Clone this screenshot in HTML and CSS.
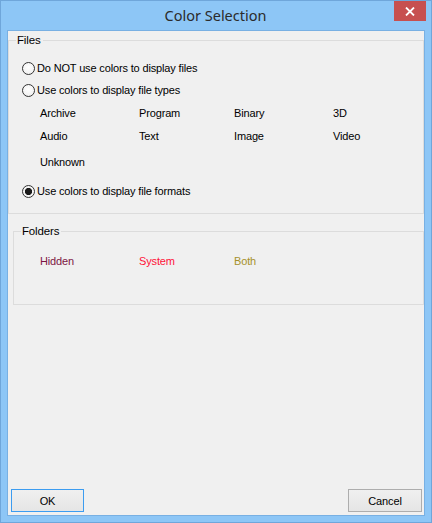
FILE: index.html
```html
<!DOCTYPE html>
<html>
<head>
<meta charset="utf-8">
<link rel="stylesheet" href="styles.css">
</head>
<body>
<div class="window">
  <div class="titlebar">
    <span></span>
    <span class="title">Color Selection</span>
    <span class="close"><svg width="10" height="9" viewBox="0 0 10 9"><path d="M1 0.5 L9 8.5 M9 0.5 L1 8.5" stroke="#fff" stroke-width="1.8" fill="none"/></svg></span>
  </div>
  <div class="client">
    <fieldset class="group files">
      <legend>Files</legend>
      <div class="radio r1">Do NOT use colors to display files</div>
      <div class="radio r2">Use colors to display file types</div>
      <div class="types">
        <span>Archive</span><span>Program</span><span>Binary</span><span>3D</span>
        <span class="row2">Audio</span><span class="row2">Text</span><span class="row2">Image</span><span class="row2">Video</span>
        <span class="row3">Unknown</span>
      </div>
      <div class="radio checked r3">Use colors to display file formats</div>
    </fieldset>
    <fieldset class="group folders">
      <legend>Folders</legend>
      <div class="types fold">
        <span class="hidden">Hidden</span><span class="system">System</span><span class="both">Both</span>
      </div>
    </fieldset>
    <div class="buttons">
      <div class="btn default">OK</div>
      <div class="btn">Cancel</div>
    </div>
  </div>
</div>
</body>
</html>
```

FILE: styles.css
```css
html, body { margin: 0; padding: 0; }
body { width: 432px; height: 523px; overflow: hidden; background: #8dc6f6; }

.window {
  box-sizing: border-box;
  width: 432px;
  height: 523px;
  background: #8dc6f6;
  border: 1px solid #6fa6da;
  display: flex;
  flex-direction: column;
}

.titlebar {
  height: 30px;
  display: grid;
  grid-template-columns: 1fr auto 1fr;
  align-items: start;
}
.title {
  font-family: "Noto Sans", "Open Sans", sans-serif;
  font-size: 14.5px;
  line-height: 28px;
  color: #2b2b2b;
  padding-right: 1px;
}
.close {
  justify-self: end;
  width: 32px;
  height: 20px;
  margin-right: 5px;
  background: #c75050;
  display: flex;
  align-items: center;
  justify-content: center;
}
.close svg { display: block; }

.client {
  margin: 0 7px;
  height: 484px;
  background: #f0f0f0;
  box-shadow: 0 0 0 1px #78b0e3;
  display: flex;
  flex-direction: column;
  font-family: "Liberation Sans", Arial, sans-serif;
  font-size: 11px;
  letter-spacing: -0.15px;
  color: #000;
  padding: 0 2px 3px 3px;
  box-sizing: border-box;
}

.group {
  box-sizing: border-box;
  border: 1px solid #dcdcdc;
  margin: 0;
  padding: 0;
  min-width: 0;
}
.group legend {
  margin-left: 7px;
  padding: 0 2px 0 1px;
  line-height: 14px;
  font-size: 11.5px;
  color: #000;
}
.files {
  margin: 2px -2px 0 -3px;
  height: 181px;
}
.folders {
  margin: 10px -2px 0 2px;
  height: 81px;
}

.radio {
  display: flex;
  align-items: center;
  height: 14px;
  line-height: 14px;
  margin-left: 13px;
}
.radio::before {
  content: "";
  box-sizing: border-box;
  width: 13px;
  height: 13px;
  border: 1px solid #333;
  border-radius: 50%;
  background: radial-gradient(circle at 50% 40%, #fff 0%, #f4f4f4 60%, #e6e6e6 100%);
  margin-right: 2px;
  flex: none;
}
.radio.checked::before {
  background: radial-gradient(circle, #1a1a1a 0, #1a1a1a 3.3px, #f4f4f4 3.9px, #f4f4f4 100%);
}
.r1 { margin-top: 14px; }
.r2 { margin-top: 8px; }
.r3 { margin-top: 18px; }

.types {
  display: grid;
  grid-template-columns: 99px 95px 99px auto;
  grid-auto-rows: 14px;
  line-height: 14px;
  margin: 9px 0 0 31px;
  row-gap: 9px;
}
.types .row3 { margin-top: 3px; }

.fold { margin: 16px 0 0 26px; }
.hidden { color: #7d1443; }
.system { color: #ff1238; }
.both { color: #a6902b; }

.buttons {
  margin-top: auto;
  display: flex;
  justify-content: space-between;
}
.btn {
  box-sizing: border-box;
  width: 74px;
  height: 23px;
  border: 1px solid #adadad;
  background: linear-gradient(#f0f0f0, #e5e5e5);
  display: flex;
  align-items: center;
  justify-content: center;
  line-height: 14px;
}
.btn.default {
  border-color: #3c9cf0;
  width: 73px;
}
```
